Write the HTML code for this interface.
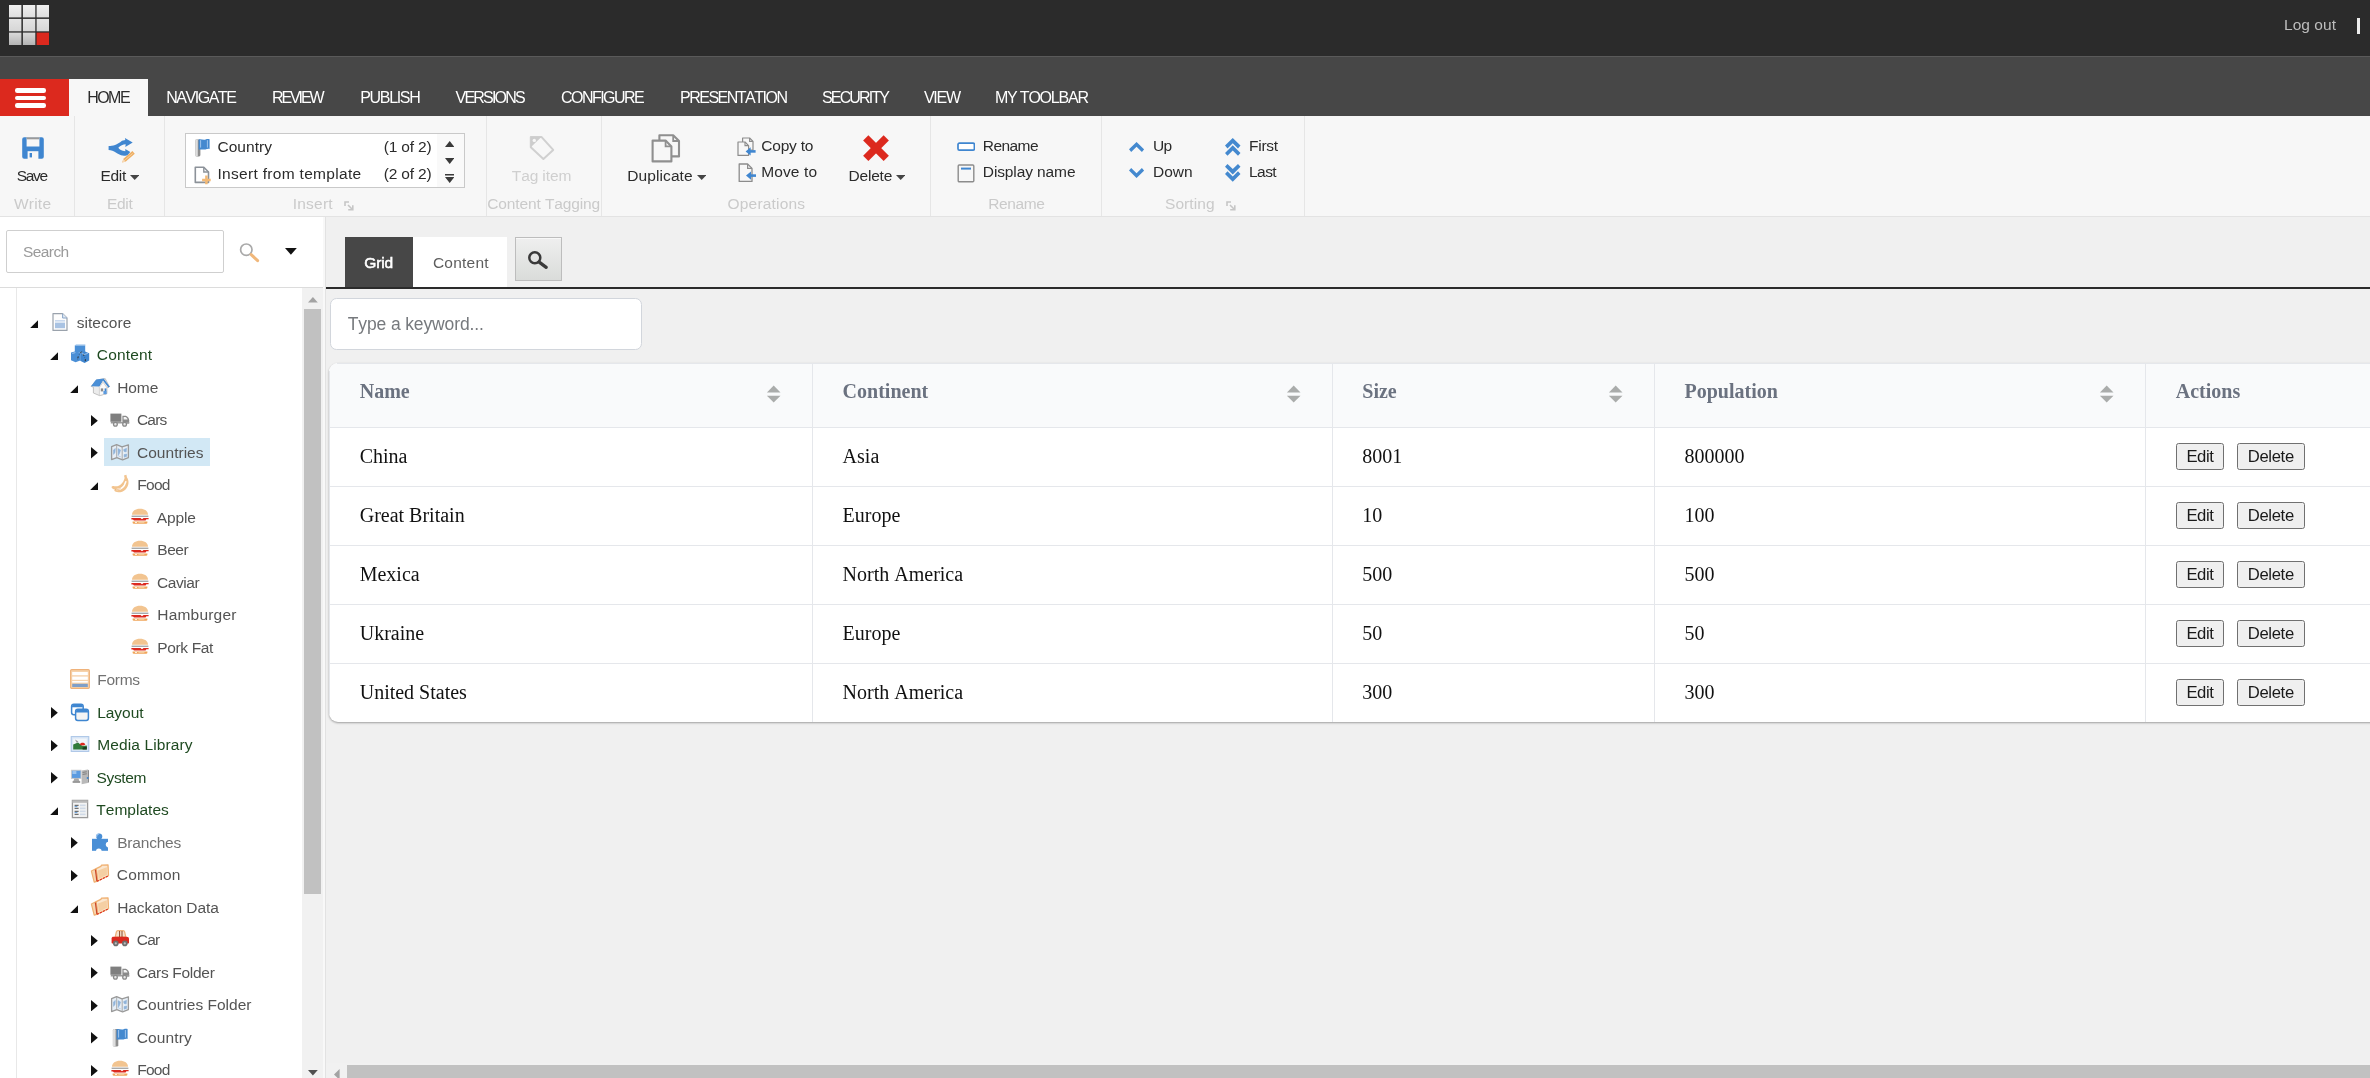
<!DOCTYPE html>
<html><head><meta charset="utf-8"><title>Sitecore</title><style>
html,body{margin:0;padding:0;}
body{width:2370px;height:1078px;overflow:hidden;position:relative;background:#f0f0f0;font-family:"Liberation Sans",sans-serif;font-kerning:none;}
#w{position:absolute;left:0;top:0;width:2370px;height:1078px;overflow:hidden;will-change:transform;background:#f0f0f0;}
.r{position:absolute;display:block;}
.t{position:absolute;white-space:pre;display:block;font-kerning:none;}
</style></head><body><div id="w">
<div class="r" style="left:0px;top:0px;width:2370px;height:56px;background:#2b2b2b;"></div>
<div class="r" style="left:0px;top:56px;width:2370px;height:1px;background:#5a5a5a;"></div>
<div class="r" style="left:0px;top:57px;width:2370px;height:59px;background:#474747;"></div>
<svg class="r" style="left:9px;top:5px;" width="40" height="40" viewBox="0 0 40 40"><defs><linearGradient id="lg0" x1="0" y1="0" x2="0" y2="1"><stop offset="0" stop-color="#f0f0f0"/><stop offset="1" stop-color="#dedede"/></linearGradient><linearGradient id="lg1" x1="0" y1="0" x2="0" y2="1"><stop offset="0" stop-color="#e4e4e4"/><stop offset="1" stop-color="#d6d6d6"/></linearGradient><linearGradient id="lg2" x1="0" y1="0" x2="0" y2="1"><stop offset="0" stop-color="#dadada"/><stop offset="1" stop-color="#b4b4b4"/></linearGradient></defs><rect x="0" y="0" width="12.4" height="12.4" fill="url(#lg0)"/><rect x="13.9" y="0" width="12.4" height="12.4" fill="url(#lg0)"/><rect x="27.6" y="0" width="12.4" height="12.4" fill="url(#lg0)"/><rect x="0" y="13.9" width="12.4" height="12.4" fill="url(#lg1)"/><rect x="13.9" y="13.9" width="12.4" height="12.4" fill="url(#lg1)"/><rect x="27.6" y="13.9" width="12.4" height="12.4" fill="url(#lg1)"/><rect x="0" y="27.6" width="12.4" height="12.4" fill="url(#lg2)"/><rect x="13.9" y="27.6" width="12.4" height="12.4" fill="url(#lg2)"/><rect x="27.6" y="27.6" width="12.4" height="12.4" fill="#dc291e"/></svg>
<span class="t" style="left:2284.00px;top:14.00px;font-size:15.50px;line-height:22px;color:#bdbdbd;letter-spacing:0.048px;">Log out</span>
<div class="r" style="left:2357.4px;top:18px;width:2.2px;height:15.5px;background:#ececec;"></div>
<div class="r" style="left:0px;top:79px;width:69px;height:37px;background:#dc291e;"></div>
<div class="r" style="left:15.3px;top:88.3px;width:30.6px;height:4.4px;background:#fff;border-radius:2.2px;"></div>
<div class="r" style="left:15.3px;top:95.8px;width:30.6px;height:4.4px;background:#fff;border-radius:2.2px;"></div>
<div class="r" style="left:15.3px;top:103.3px;width:30.6px;height:4.4px;background:#fff;border-radius:2.2px;"></div>
<div class="r" style="left:69px;top:79px;width:79px;height:37px;background:#f7f7f7;"></div>
<span class="t" style="left:87.20px;top:87.00px;font-size:16.00px;line-height:22px;color:#2b2b2b;letter-spacing:-1.533px;">HOME</span>
<span class="t" style="left:166.20px;top:87.00px;font-size:16.00px;line-height:22px;color:#ffffff;letter-spacing:-1.467px;">NAVIGATE</span>
<span class="t" style="left:272.10px;top:87.00px;font-size:16.00px;line-height:22px;color:#ffffff;letter-spacing:-2.123px;">REVIEW</span>
<span class="t" style="left:360.30px;top:87.00px;font-size:16.00px;line-height:22px;color:#ffffff;letter-spacing:-1.345px;">PUBLISH</span>
<span class="t" style="left:455.60px;top:87.00px;font-size:16.00px;line-height:22px;color:#ffffff;letter-spacing:-1.798px;">VERSIONS</span>
<span class="t" style="left:561.00px;top:87.00px;font-size:16.00px;line-height:22px;color:#ffffff;letter-spacing:-1.537px;">CONFIGURE</span>
<span class="t" style="left:680.00px;top:87.00px;font-size:16.00px;line-height:22px;color:#ffffff;letter-spacing:-1.493px;">PRESENTATION</span>
<span class="t" style="left:822.00px;top:87.00px;font-size:16.00px;line-height:22px;color:#ffffff;letter-spacing:-1.843px;">SECURITY</span>
<span class="t" style="left:924.00px;top:87.00px;font-size:16.00px;line-height:22px;color:#ffffff;letter-spacing:-1.297px;">VIEW</span>
<span class="t" style="left:995.00px;top:87.00px;font-size:16.00px;line-height:22px;color:#ffffff;letter-spacing:-1.210px;">MY TOOLBAR</span>
<div class="r" style="left:0px;top:116px;width:2370px;height:100px;background:#f7f7f7;"></div>
<div class="r" style="left:0px;top:216px;width:2370px;height:1px;background:#e3e3e3;"></div>
<div class="r" style="left:74px;top:116px;width:1px;height:100px;background:#e6e6e6;"></div>
<div class="r" style="left:164px;top:116px;width:1px;height:100px;background:#e6e6e6;"></div>
<div class="r" style="left:486px;top:116px;width:1px;height:100px;background:#e6e6e6;"></div>
<div class="r" style="left:601px;top:116px;width:1px;height:100px;background:#e6e6e6;"></div>
<div class="r" style="left:930px;top:116px;width:1px;height:100px;background:#e6e6e6;"></div>
<div class="r" style="left:1101px;top:116px;width:1px;height:100px;background:#e6e6e6;"></div>
<div class="r" style="left:1304px;top:116px;width:1px;height:100px;background:#e6e6e6;"></div>
<svg class="r" style="left:22px;top:137px;" width="22" height="22" viewBox="0 0 22 22"><path d="M2.2 0.3H19.8a2 2 0 0 1 2 2V19.8a2 2 0 0 1 -2 2H2.2a2 2 0 0 1 -2 -2V2.3a2 2 0 0 1 2 -2Z" fill="#3f86d0"/><rect x="4.6" y="0.3" width="12.8" height="9.2" fill="#f7f7f7"/><rect x="4.6" y="0.3" width="12.8" height="2" fill="#9a9a9a"/><rect x="5.6" y="14.2" width="10.8" height="7.9" fill="#f7f7f7"/><rect x="7.6" y="16" width="2.4" height="4.4" fill="#3f86d0"/></svg>
<span class="t" style="left:16.80px;top:165.00px;font-size:15.50px;line-height:22px;color:#2b2b2b;letter-spacing:-1.376px;">Save</span>
<span class="t" style="left:14.00px;top:193.00px;font-size:15.50px;line-height:22px;color:#cacaca;letter-spacing:0.211px;">Write</span>
<svg class="r" style="left:108px;top:137px;" width="28" height="27" viewBox="0 0 28 27"><path d="M0.6 9C5 9 9 8 14 3.8L17.3 3 16.9 1 24.7 5.4 17.3 9.9 17.7 7.3C15 7.4 12.5 8.8 10.3 10.8 11.5 12.4 13.5 14 17.3 14.3L17.3 12.1 22.3 14.9 19.5 18.2C17 18.8 15.5 18.8 14 18.6 10 17.5 6 13.2 0.6 13Z" fill="#4086d0"/><path d="M14.2 25.6L15.42 21.84 24.42 14.04 26.78 16.76 17.78 24.56Z" fill="#eeae62"/><path d="M14.2 25.6L15.42 21.84 17.78 24.56Z" fill="#f7d9b4"/><path d="M17.2 22.8L24.6 16.4" stroke="#f7d3a4" stroke-width="1" fill="none"/></svg>
<span class="t" style="left:100.40px;top:165.00px;font-size:15.50px;line-height:22px;color:#2b2b2b;letter-spacing:-0.270px;">Edit</span>
<svg class="r" style="left:129.8px;top:174.8px;" width="9.4" height="5" viewBox="0 0 9.4 5"><path d="M0 0H9.4 L4.7 5Z" fill="#454545"/></svg>
<span class="t" style="left:106.90px;top:193.00px;font-size:15.50px;line-height:22px;color:#cacaca;letter-spacing:-0.303px;">Edit</span>
<div class="r" style="left:185px;top:133px;width:280px;height:55px;background:#fff;border:1px solid #c9c9c9;box-sizing:border-box;"></div>
<div class="r" style="left:437px;top:134px;width:27px;height:53px;background:#f9f9f9;"></div>
<svg class="r" style="left:194px;top:138.8px;" width="17" height="18" viewBox="0 0 17 18"><rect x="1.2" y="0.4" width="5.2" height="17" rx="1.4" fill="#8e8e8e"/><rect x="1.2" y="0.4" width="2.6" height="17" rx="1.2" fill="#dedede"/><path d="M4.6 0.4C7 -0.2 9.4 1.2 11.6 0.4 13 0 14.4 -0.1 15.6 0.3V10C14.2 9.6 12.8 10 11.4 10.4 9.2 11 7 10 4.6 10.8Z" fill="#4489cf"/><path d="M6.6 1.2V8.6M13.4 1.2V8.6" stroke="#a9cbee" stroke-width=".9"/></svg>
<span class="t" style="left:217.40px;top:136.00px;font-size:15.50px;line-height:22px;color:#2b2b2b;letter-spacing:0.071px;">Country</span>
<span class="t" style="left:383.80px;top:136.00px;font-size:15.50px;line-height:22px;color:#2b2b2b;letter-spacing:-0.186px;">(1 of 2)</span>
<svg class="r" style="left:194px;top:165.6px;" width="19" height="19" viewBox="0 0 19 19"><path d="M1.3 1.3H9.8L14.5 6V16.4H1.3Z" fill="#fff" stroke="#8c9299" stroke-width="1.6" stroke-linejoin="round"/><path d="M9.8 1.3V6H14.5" fill="none" stroke="#8c9299" stroke-width="1.4"/><path d="M12.4 9.6V18.2M8.1 13.9H16.7" stroke="#f2b976" stroke-width="2.5" fill="none"/></svg>
<span class="t" style="left:217.40px;top:163.00px;font-size:15.50px;line-height:22px;color:#2b2b2b;letter-spacing:0.314px;">Insert from template</span>
<span class="t" style="left:383.80px;top:163.00px;font-size:15.50px;line-height:22px;color:#2b2b2b;letter-spacing:-0.186px;">(2 of 2)</span>
<svg class="r" style="left:445px;top:141px;" width="9.4" height="6" viewBox="0 0 9.4 6"><path d="M0 6H9.4L4.7 0Z" fill="#3a3a3a"/></svg>
<svg class="r" style="left:445px;top:158px;" width="9.4" height="6" viewBox="0 0 9.4 6"><path d="M0 0H9.4L4.7 6Z" fill="#3a3a3a"/></svg>
<svg class="r" style="left:445px;top:174px;" width="9.4" height="9" viewBox="0 0 9.4 9"><path d="M0 0H9.4V1.6H0Z M0 3H9.4L4.7 9Z" fill="#3a3a3a"/></svg>
<span class="t" style="left:292.70px;top:193.00px;font-size:15.50px;line-height:22px;color:#cacaca;letter-spacing:0.227px;">Insert</span>
<svg class="r" style="left:344px;top:200.5px;" width="10" height="10" viewBox="0 0 10 10"><path d="M1 5V1H5" fill="none" stroke="#c6c6c6" stroke-width="1.6"/><path d="M4 4L8.5 8.5M8.8 4.2V8.8H4.2" fill="none" stroke="#c6c6c6" stroke-width="1.6"/></svg>
<svg class="r" style="left:529px;top:135px;" width="26" height="26" viewBox="0 0 26 26"><path d="M1.8 1.9H12.4L24.2 14.9 14.4 24 1.8 12.3Z" fill="none" stroke="#d0d0d0" stroke-width="2" stroke-linejoin="round"/><path d="M1.8 1.9H12.4L1.8 12.3Z" fill="#cdcdcd"/><circle cx="5.3" cy="5.4" r="1.7" fill="#f7f7f7"/></svg>
<span class="t" style="left:511.80px;top:165.00px;font-size:15.50px;line-height:22px;color:#cfcfcf;letter-spacing:-0.110px;">Tag item</span>
<span class="t" style="left:487.30px;top:193.00px;font-size:15.50px;line-height:22px;color:#cacaca;letter-spacing:-0.127px;">Content Tagging</span>
<svg class="r" style="left:651px;top:134px;" width="30" height="29" viewBox="0 0 30 29"><path d="M8.4 1.2H22.2L28 7V22.4H8.4Z" fill="#f7f7f7" stroke="#8f8f8f" stroke-width="2.1" stroke-linejoin="round"/><path d="M22.2 1.2V7H28" fill="none" stroke="#8f8f8f" stroke-width="1.8"/><path d="M1.6 6.6H14.6L20.4 12.4V27.4H1.6Z" fill="#f7f7f7" stroke="#8f8f8f" stroke-width="2.1" stroke-linejoin="round"/><path d="M14.6 6.6V12.4H20.4" fill="none" stroke="#8f8f8f" stroke-width="1.8"/></svg>
<span class="t" style="left:627.30px;top:165.00px;font-size:15.50px;line-height:22px;color:#2b2b2b;letter-spacing:0.085px;">Duplicate</span>
<svg class="r" style="left:697px;top:174.8px;" width="9.4" height="5" viewBox="0 0 9.4 5"><path d="M0 0H9.4 L4.7 5Z" fill="#454545"/></svg>
<svg class="r" style="left:736.5px;top:137px;" width="20" height="20" viewBox="0 0 20 20"><path d="M5.6 1H12.6L16 4.4V13H5.6Z" fill="#f7f7f7" stroke="#8c8c8c" stroke-width="1.2" stroke-linejoin="round"/><path d="M12.6 1V4.4H16" fill="none" stroke="#8c8c8c" stroke-width="1.1"/><path d="M1 5H8L11.6 8.6V18.4H1Z" fill="#f7f7f7" stroke="#8c8c8c" stroke-width="1.2" stroke-linejoin="round"/><path d="M8 5V8.6H11.6" fill="none" stroke="#8c8c8c" stroke-width="1.1"/><path d="M18.6 14.4H12.4" stroke="#3f86d0" stroke-width="2.6" fill="none"/><path d="M8.6 14.4L13.6 10.2V18.6Z" fill="#3f86d0"/></svg>
<span class="t" style="left:761.20px;top:135.00px;font-size:15.50px;line-height:22px;color:#2b2b2b;letter-spacing:-0.186px;">Copy to</span>
<svg class="r" style="left:736.5px;top:163px;" width="20" height="20" viewBox="0 0 20 20"><path d="M2.2 1H10.6L15 5.4V18.4H2.2Z" fill="#f7f7f7" stroke="#8c8c8c" stroke-width="1.3" stroke-linejoin="round"/><path d="M10.6 1V5.4H15" fill="none" stroke="#8c8c8c" stroke-width="1.2"/><path d="M19 12.6H12.8" stroke="#3f86d0" stroke-width="2.6" fill="none"/><path d="M9 12.6L14 8.4V16.8Z" fill="#3f86d0"/></svg>
<span class="t" style="left:761.20px;top:161.00px;font-size:15.50px;line-height:22px;color:#2b2b2b;letter-spacing:0.127px;">Move to</span>
<svg class="r" style="left:862px;top:134px;" width="28" height="28" viewBox="0 0 28 28"><g transform="translate(14 14.05) rotate(45)" fill="#dc291e"><rect x="-14.5" y="-3.7" width="29" height="7.4"/><rect x="-3.7" y="-14.5" width="7.4" height="29"/></g></svg>
<span class="t" style="left:848.40px;top:165.00px;font-size:15.50px;line-height:22px;color:#2b2b2b;letter-spacing:-0.161px;">Delete</span>
<svg class="r" style="left:896px;top:174.8px;" width="9.4" height="5" viewBox="0 0 9.4 5"><path d="M0 0H9.4 L4.7 5Z" fill="#454545"/></svg>
<span class="t" style="left:727.60px;top:193.00px;font-size:15.50px;line-height:22px;color:#cacaca;letter-spacing:0.176px;">Operations</span>
<svg class="r" style="left:956.5px;top:142px;" width="18.5" height="9.5" viewBox="0 0 18.5 9.5"><rect x="1" y="1.2" width="16.4" height="7" rx="1.4" fill="#fff" stroke="#3f86d0" stroke-width="1.7"/></svg>
<span class="t" style="left:982.80px;top:135.00px;font-size:15.50px;line-height:22px;color:#2b2b2b;letter-spacing:-0.557px;">Rename</span>
<svg class="r" style="left:956.5px;top:163.5px;" width="18.5" height="19" viewBox="0 0 18.5 19"><rect x="1.2" y="1" width="15.6" height="16.8" rx="1" fill="#f7f7f7" stroke="#8c8c8c" stroke-width="1.4"/><rect x="4" y="3.6" width="10" height="2" fill="#3f86d0"/></svg>
<span class="t" style="left:982.80px;top:161.00px;font-size:15.50px;line-height:22px;color:#2b2b2b;letter-spacing:-0.109px;">Display name</span>
<span class="t" style="left:988.20px;top:193.00px;font-size:15.50px;line-height:22px;color:#cacaca;letter-spacing:-0.357px;">Rename</span>
<svg class="r" style="left:1129.3px;top:142.1px;" width="15.1" height="9.9" viewBox="0 0 15.1 9.9"><path d="M7.55 0L15.1 7.3 12.9 9.9 7.55 4.7 2.2 9.9 0 7.3Z" fill="#4489cf"/></svg>
<span class="t" style="left:1153.00px;top:135.00px;font-size:15.50px;line-height:22px;color:#2b2b2b;letter-spacing:-0.614px;">Up</span>
<svg class="r" style="left:1129.3px;top:168px;" width="15.1" height="9.9" viewBox="0 0 15.1 9.9"><path d="M7.55 0L15.1 7.3 12.9 9.9 7.55 4.7 2.2 9.9 0 7.3Z" fill="#4489cf" transform="translate(0 9.9) scale(1 -1)"/></svg>
<span class="t" style="left:1153.00px;top:161.00px;font-size:15.50px;line-height:22px;color:#2b2b2b;letter-spacing:-0.043px;">Down</span>
<svg class="r" style="left:1225.2px;top:138.2px;" width="15.5" height="17.7" viewBox="0 0 15.5 17.7"><g fill="#4489cf"><path d="M7.75 0L15.5 7.6 13 10.4 7.75 5.3 2.5 10.4 0 7.6Z"/><path d="M7.75 0L15.5 7.6 13 10.4 7.75 5.3 2.5 10.4 0 7.6Z" transform="translate(0 7.3)"/></g></svg>
<span class="t" style="left:1249.10px;top:135.00px;font-size:15.50px;line-height:22px;color:#2b2b2b;letter-spacing:-0.282px;">First</span>
<svg class="r" style="left:1225.2px;top:164.3px;" width="15.5" height="17.7" viewBox="0 0 15.5 17.7"><g fill="#4489cf" transform="translate(0 17.7) scale(1 -1)"><path d="M7.75 0L15.5 7.6 13 10.4 7.75 5.3 2.5 10.4 0 7.6Z"/><path d="M7.75 0L15.5 7.6 13 10.4 7.75 5.3 2.5 10.4 0 7.6Z" transform="translate(0 7.3)"/></g></svg>
<span class="t" style="left:1249.10px;top:161.00px;font-size:15.50px;line-height:22px;color:#2b2b2b;letter-spacing:-0.599px;">Last</span>
<span class="t" style="left:1165.00px;top:193.00px;font-size:15.50px;line-height:22px;color:#cacaca;letter-spacing:0.065px;">Sorting</span>
<svg class="r" style="left:1226px;top:200.5px;" width="10" height="10" viewBox="0 0 10 10"><path d="M1 5V1H5" fill="none" stroke="#c6c6c6" stroke-width="1.6"/><path d="M4 4L8.5 8.5M8.8 4.2V8.8H4.2" fill="none" stroke="#c6c6c6" stroke-width="1.6"/></svg>
<div class="r" style="left:0px;top:217px;width:323px;height:861px;background:#fff;"></div>
<div class="r" style="left:323px;top:217px;width:2px;height:861px;background:#f8f8f8;"></div>
<div class="r" style="left:324.7px;top:217px;width:1.1px;height:861px;background:#e2e2e2;"></div>
<div class="r" style="left:6px;top:230px;width:218px;height:43px;background:#fff;border:1px solid #cfcfcf;box-sizing:border-box;border-radius:2px;"></div>
<span class="t" style="left:23.00px;top:241.00px;font-size:15.50px;line-height:22px;color:#9a9a9a;letter-spacing:-0.582px;">Search</span>
<svg class="r" style="left:239px;top:242px;" width="22" height="21" viewBox="0 0 22 21"><circle cx="7.3" cy="7.7" r="5.7" fill="#fff" stroke="#a9a9a9" stroke-width="1.7"/><path d="M12.2 12.6L18.6 18.6" stroke="#f0b77a" stroke-width="3" stroke-linecap="round"/></svg>
<svg class="r" style="left:285px;top:248px;" width="12" height="7" viewBox="0 0 12 7"><path d="M0 0H11.8L5.9 6.8Z" fill="#111"/></svg>
<div class="r" style="left:0px;top:287px;width:323px;height:1px;background:#dcdcdc;"></div>
<div class="r" style="left:16px;top:288px;width:1px;height:790px;background:#e8e8e8;"></div>
<div class="r" style="left:302px;top:288px;width:21px;height:790px;background:#f1f1f1;"></div>
<div class="r" style="left:304px;top:309px;width:17px;height:585px;background:#c1c1c1;"></div>
<svg class="r" style="left:307.6px;top:296.6px;" width="10" height="6" viewBox="0 0 10 6"><path d="M0 5.6H9.8L4.9 0Z" fill="#a3a3a3"/></svg>
<svg class="r" style="left:307.6px;top:1070px;" width="10" height="6" viewBox="0 0 10 6"><path d="M0 0H9.8L4.9 5.4Z" fill="#505050"/></svg>
<svg class="r" style="left:30px;top:319.5px;" width="8.2" height="8.2" viewBox="0 0 8.2 8.2"><path d="M8.2 0V8.2H0Z" fill="#111"/></svg>
<svg class="r" style="left:50px;top:311.9px;" width="20" height="20" viewBox="0 0 20 20"><path d="M3 1.6H12.6L17 6V18.4H3Z" fill="#fdfdfd" stroke="#9aa2ac" stroke-width="1.2" stroke-linejoin="round"/><path d="M12.6 1.6V6H17" fill="#dfe9f5" stroke="#8aa6c8" stroke-width="1"/><rect x="5" y="8" width="10" height="1.6" fill="#c9d9ee"/><rect x="5" y="10.6" width="10" height="5.6" fill="#a9c3e3"/></svg>
<span class="t" style="left:76.70px;top:312.00px;font-size:15.50px;line-height:22px;color:#545454;letter-spacing:0.061px;">sitecore</span>
<svg class="r" style="left:50px;top:352px;" width="8.2" height="8.2" viewBox="0 0 8.2 8.2"><path d="M8.2 0V8.2H0Z" fill="#111"/></svg>
<svg class="r" style="left:70px;top:344.4px;" width="20" height="20" viewBox="0 0 20 20"><path d="M4.8 1.4H15.2V8.6H4.8Z" fill="#4a8fd6"/><path d="M4.8 1.4L6 0.5H15.4L15.2 1.4Z" fill="#8db9e8"/><path d="M1 8.4L5.6 7.2 10.2 8.8V16.6L5.6 18.2 1 16.2Z" fill="#4a8fd6"/><path d="M10.2 9L15 7.4 19.2 9.2V16.6L14.6 19 10.2 16.8Z" fill="#3f86d0"/><path d="M11.6 7.6L9.2 10.6M8.2 12.4L7.6 16M13.2 10L14.6 13.4M15.4 15.2L15.2 17.6" stroke="#2b2b2b" stroke-width="1" stroke-dasharray="2 1.4"/><path d="M2.2 9.4L5.4 8.6M11.8 9.6L14.6 10.4 17.8 9.4" stroke="#a9cbee" stroke-width=".9" fill="none"/></svg>
<span class="t" style="left:96.80px;top:344.00px;font-size:15.50px;line-height:22px;color:#1f4a21;letter-spacing:0.152px;">Content</span>
<svg class="r" style="left:70px;top:384.5px;" width="8.2" height="8.2" viewBox="0 0 8.2 8.2"><path d="M8.2 0V8.2H0Z" fill="#111"/></svg>
<svg class="r" style="left:90px;top:376.9px;" width="20" height="20" viewBox="0 0 20 20"><path d="M1.2 9.4L6.4 3 15.2 1.6 19.4 9.6 18.6 10.4H16.8V16.6L9.6 18.6 3.4 16V10.2Z" fill="#ececec" stroke="#b4b4b4" stroke-width=".8"/><path d="M1 9.2L6.2 2.6 13.6 1.4 9 9.4Z" fill="#4a8fd6"/><path d="M13.6 1.4L19.8 9.8 18.4 10.6 13 3.6 9.2 9.6 8.6 8.6Z" fill="#3f86d0"/><path d="M9.4 10.4L13 5.2 16.8 10.4V16.6L9.4 18.6Z" fill="#fafafa" stroke="#c0c0c0" stroke-width=".6"/><rect x="10.8" y="11.4" width="2.4" height="3" fill="#8a8a8a"/><path d="M14.6 11.4H16.4V17.2H14.6Z" fill="#3f86d0"/><path d="M13.4 14H16.4V17H13.4Z" fill="#5b9be0"/></svg>
<span class="t" style="left:117.20px;top:377.00px;font-size:15.50px;line-height:22px;color:#545454;letter-spacing:-0.082px;">Home</span>
<svg class="r" style="left:91.1px;top:414.9px;" width="7" height="11.4" viewBox="0 0 7 11.4"><path d="M0 0L6.8 5.7 0 11.4Z" fill="#111"/></svg>
<svg class="r" style="left:110px;top:409.4px;" width="20" height="20" viewBox="0 0 20 20"><rect x="0.4" y="4.6" width="11" height="8.2" fill="#7f7f7f"/><path d="M12.4 6.8H15.8C17.8 7.4 19 9.2 19.2 11.2V14.4H12.4Z" fill="#8a8a8a"/><path d="M13.6 8H15.6C16.8 8.6 17.4 9.6 17.6 10.6H13.6Z" fill="#f4f4f4"/><rect x="0.8" y="13" width="18.4" height="1.5" fill="#9a9a9a"/><circle cx="5.4" cy="15.3" r="1.9" fill="#e8e8e8" stroke="#8a8a8a" stroke-width="1.3"/><circle cx="14.6" cy="15.3" r="1.9" fill="#e8e8e8" stroke="#8a8a8a" stroke-width="1.3"/></svg>
<span class="t" style="left:137.00px;top:409.00px;font-size:15.50px;line-height:22px;color:#545454;letter-spacing:-0.842px;">Cars</span>
<div class="r" style="left:104px;top:438px;width:106px;height:28px;background:#d2e8f5;"></div>
<svg class="r" style="left:91.1px;top:447.4px;" width="7" height="11.4" viewBox="0 0 7 11.4"><path d="M0 0L6.8 5.7 0 11.4Z" fill="#111"/></svg>
<svg class="r" style="left:110px;top:441.9px;" width="20" height="20" viewBox="0 0 20 20"><path d="M1.6 4.6L6.6 2.6 12 4.8 18.4 2.8V15.6L12.6 17.8 6.8 15.6 1.6 17.6Z" fill="#e6eef6" stroke="#9a9a9a" stroke-width="1.3" stroke-linejoin="round"/><path d="M6.7 2.8V15.4M12.2 5V17.6" stroke="#a4a4a4" stroke-width=".9"/><path d="M3.4 8L5.4 6.4 5 10.4 3.6 12.4ZM8 6.6L10.6 8 9.6 11.2 8.2 13.6ZM13.6 7.6L16.6 6.2 16.2 10 14 9.4ZM14 12.6L16.8 12 16.6 14.4 14.2 15.2ZM8.4 14L10.8 14.8" fill="#8fb3d9" stroke="#8fb3d9" stroke-width=".5"/></svg>
<span class="t" style="left:137.00px;top:442.00px;font-size:15.50px;line-height:22px;color:#545454;letter-spacing:0.020px;">Countries</span>
<svg class="r" style="left:90px;top:482px;" width="8.2" height="8.2" viewBox="0 0 8.2 8.2"><path d="M8.2 0V8.2H0Z" fill="#111"/></svg>
<svg class="r" style="left:110px;top:474.4px;" width="20" height="20" viewBox="0 0 20 20"><path d="M14 1.4L16.4 0.8 17 3.6C19.4 7 19 12 15.6 15.4 12.6 18.4 8 19 5.2 17.6 4 17 4.2 15.8 5 15.6 3 15.4 1.2 14.2 1.6 12.8 1.8 12 3 11.8 4.4 12.2 9 13.2 13.2 9.6 14.6 4Z" fill="#f2c48f"/><path d="M7 15.6C10.6 15.4 14.4 12.8 15.8 7.8" fill="none" stroke="#fff" stroke-width="1.5" stroke-linecap="round"/><path d="M5 15.6C7 15.8 9 15.4 10.6 14.6" fill="none" stroke="#eab276" stroke-width=".7"/></svg>
<span class="t" style="left:137.20px;top:474.00px;font-size:15.50px;line-height:22px;color:#545454;letter-spacing:-0.676px;">Food</span>
<svg class="r" style="left:130px;top:506.9px;" width="20" height="20" viewBox="0 0 20 20"><path d="M2 7.8C2 4 5.4 1.8 10 1.8S18 4 18 7.8Z" fill="#f2c490"/><rect x="1.6" y="8.6" width="16.8" height="1.3" fill="#a0a0a0"/><path d="M1.4 10.8H18.6V13.4H1.4Z" fill="#fff"/><path d="M1.4 11H10.5L12 12.2 13.6 11H18.6V12.2H16.4L15.6 13.4H4L3 12.6H1.4Z" fill="#dc291e"/><path d="M2.6 14.4H17.4V15.4C17.4 16.4 16.6 16.8 15.8 16.8H4.2C3.4 16.8 2.6 16.4 2.6 15.4Z" fill="#f0a55a"/><rect x="5" y="15.2" width="2" height=".8" fill="#fff"/><rect x="8.4" y="15.2" width="6" height=".8" fill="#f7d2a8"/></svg>
<span class="t" style="left:156.70px;top:507.00px;font-size:15.50px;line-height:22px;color:#545454;letter-spacing:-0.086px;">Apple</span>
<svg class="r" style="left:130px;top:539.4px;" width="20" height="20" viewBox="0 0 20 20"><path d="M2 7.8C2 4 5.4 1.8 10 1.8S18 4 18 7.8Z" fill="#f2c490"/><rect x="1.6" y="8.6" width="16.8" height="1.3" fill="#a0a0a0"/><path d="M1.4 10.8H18.6V13.4H1.4Z" fill="#fff"/><path d="M1.4 11H10.5L12 12.2 13.6 11H18.6V12.2H16.4L15.6 13.4H4L3 12.6H1.4Z" fill="#dc291e"/><path d="M2.6 14.4H17.4V15.4C17.4 16.4 16.6 16.8 15.8 16.8H4.2C3.4 16.8 2.6 16.4 2.6 15.4Z" fill="#f0a55a"/><rect x="5" y="15.2" width="2" height=".8" fill="#fff"/><rect x="8.4" y="15.2" width="6" height=".8" fill="#f7d2a8"/></svg>
<span class="t" style="left:157.30px;top:539.00px;font-size:15.50px;line-height:22px;color:#545454;letter-spacing:-0.480px;">Beer</span>
<svg class="r" style="left:130px;top:571.9px;" width="20" height="20" viewBox="0 0 20 20"><path d="M2 7.8C2 4 5.4 1.8 10 1.8S18 4 18 7.8Z" fill="#f2c490"/><rect x="1.6" y="8.6" width="16.8" height="1.3" fill="#a0a0a0"/><path d="M1.4 10.8H18.6V13.4H1.4Z" fill="#fff"/><path d="M1.4 11H10.5L12 12.2 13.6 11H18.6V12.2H16.4L15.6 13.4H4L3 12.6H1.4Z" fill="#dc291e"/><path d="M2.6 14.4H17.4V15.4C17.4 16.4 16.6 16.8 15.8 16.8H4.2C3.4 16.8 2.6 16.4 2.6 15.4Z" fill="#f0a55a"/><rect x="5" y="15.2" width="2" height=".8" fill="#fff"/><rect x="8.4" y="15.2" width="6" height=".8" fill="#f7d2a8"/></svg>
<span class="t" style="left:156.90px;top:572.00px;font-size:15.50px;line-height:22px;color:#545454;letter-spacing:-0.398px;">Caviar</span>
<svg class="r" style="left:130px;top:604.4px;" width="20" height="20" viewBox="0 0 20 20"><path d="M2 7.8C2 4 5.4 1.8 10 1.8S18 4 18 7.8Z" fill="#f2c490"/><rect x="1.6" y="8.6" width="16.8" height="1.3" fill="#a0a0a0"/><path d="M1.4 10.8H18.6V13.4H1.4Z" fill="#fff"/><path d="M1.4 11H10.5L12 12.2 13.6 11H18.6V12.2H16.4L15.6 13.4H4L3 12.6H1.4Z" fill="#dc291e"/><path d="M2.6 14.4H17.4V15.4C17.4 16.4 16.6 16.8 15.8 16.8H4.2C3.4 16.8 2.6 16.4 2.6 15.4Z" fill="#f0a55a"/><rect x="5" y="15.2" width="2" height=".8" fill="#fff"/><rect x="8.4" y="15.2" width="6" height=".8" fill="#f7d2a8"/></svg>
<span class="t" style="left:157.30px;top:604.00px;font-size:15.50px;line-height:22px;color:#545454;letter-spacing:0.196px;">Hamburger</span>
<svg class="r" style="left:130px;top:636.9px;" width="20" height="20" viewBox="0 0 20 20"><path d="M2 7.8C2 4 5.4 1.8 10 1.8S18 4 18 7.8Z" fill="#f2c490"/><rect x="1.6" y="8.6" width="16.8" height="1.3" fill="#a0a0a0"/><path d="M1.4 10.8H18.6V13.4H1.4Z" fill="#fff"/><path d="M1.4 11H10.5L12 12.2 13.6 11H18.6V12.2H16.4L15.6 13.4H4L3 12.6H1.4Z" fill="#dc291e"/><path d="M2.6 14.4H17.4V15.4C17.4 16.4 16.6 16.8 15.8 16.8H4.2C3.4 16.8 2.6 16.4 2.6 15.4Z" fill="#f0a55a"/><rect x="5" y="15.2" width="2" height=".8" fill="#fff"/><rect x="8.4" y="15.2" width="6" height=".8" fill="#f7d2a8"/></svg>
<span class="t" style="left:157.30px;top:637.00px;font-size:15.50px;line-height:22px;color:#545454;letter-spacing:-0.367px;">Pork Fat</span>
<svg class="r" style="left:70px;top:669.4px;" width="20" height="20" viewBox="0 0 20 20"><rect x="0.6" y="0.6" width="18.8" height="18.8" rx="1.2" fill="#f6d3ad" stroke="#efb27a" stroke-width="1.1"/><rect x="2.2" y="3" width="15.6" height="3.2" fill="#fff"/><rect x="2.2" y="7.6" width="15.6" height="3.2" fill="#fff"/><rect x="2.2" y="12" width="15.6" height="1.6" fill="#fff"/><rect x="2.2" y="14.8" width="15.6" height="3.2" fill="#7f9fc8"/></svg>
<span class="t" style="left:97.20px;top:669.00px;font-size:15.50px;line-height:22px;color:#727272;letter-spacing:-0.253px;">Forms</span>
<svg class="r" style="left:51.1px;top:707.4px;" width="7" height="11.4" viewBox="0 0 7 11.4"><path d="M0 0L6.8 5.7 0 11.4Z" fill="#111"/></svg>
<svg class="r" style="left:70px;top:701.9px;" width="20" height="20" viewBox="0 0 20 20"><rect x="1.6" y="2.2" width="11.6" height="10.6" rx="2.2" fill="#fff" stroke="#3f86d0" stroke-width="1.5"/><path d="M2 5.2V4.2A1.8 1.8 0 0 1 3.8 2.4H11A1.8 1.8 0 0 1 12.8 4.2V5.2Z" fill="#3f86d0"/><rect x="5.6" y="7.2" width="12.8" height="11.2" rx="2.2" fill="#f4f4f4" stroke="#3f86d0" stroke-width="1.5"/><path d="M6 10.4V9.2A1.8 1.8 0 0 1 7.8 7.4H16.2A1.8 1.8 0 0 1 18 9.2V10.4Z" fill="#3f86d0"/></svg>
<span class="t" style="left:97.20px;top:702.00px;font-size:15.50px;line-height:22px;color:#1f4a21;letter-spacing:-0.028px;">Layout</span>
<svg class="r" style="left:51.1px;top:739.9px;" width="7" height="11.4" viewBox="0 0 7 11.4"><path d="M0 0L6.8 5.7 0 11.4Z" fill="#111"/></svg>
<svg class="r" style="left:70px;top:734.4px;" width="20" height="20" viewBox="0 0 20 20"><rect x="1.2" y="2.6" width="17.6" height="14.8" fill="#dbe8f7" stroke="#a9c4e6" stroke-width="1"/><rect x="3.2" y="4.6" width="13.6" height="10.8" fill="#f2f6fa"/><path d="M3.2 15.4V10.6L8 8.4 12.4 12 16.8 11.4V15.4Z" fill="#2f7a3a"/><path d="M9.6 10.6C10.6 8.4 14.4 8.2 15.4 10.6 13.8 11.8 11.4 12 9.6 10.6Z" fill="#dc291e"/><path d="M5 5.6L8.4 7.6 6.8 9Z" fill="#9a9a9a"/><path d="M12.6 13.4L16.8 12.4V15.4H12.6Z" fill="#1d3d22"/></svg>
<span class="t" style="left:97.20px;top:734.00px;font-size:15.50px;line-height:22px;color:#1f4a21;letter-spacing:0.117px;">Media Library</span>
<svg class="r" style="left:51.1px;top:772.4px;" width="7" height="11.4" viewBox="0 0 7 11.4"><path d="M0 0L6.8 5.7 0 11.4Z" fill="#111"/></svg>
<svg class="r" style="left:70px;top:766.9px;" width="20" height="20" viewBox="0 0 20 20"><rect x="1.4" y="3.2" width="9.6" height="8.2" fill="#5b9be0" stroke="#c9c9c9" stroke-width=".9"/><rect x="2.4" y="4" width="4" height="3" fill="#9cc4ee"/><path d="M4.4 11.6H8.4L9.6 14.4H3.2Z" fill="#a8a8a8"/><rect x="2.6" y="14.2" width="7.6" height="1.6" fill="#8a8a8a"/><path d="M11.6 3.4L17.8 2.6V16L11.6 17.2Z" fill="#b9b9b9"/><path d="M17.8 2.6L19 3.6V15.2L17.8 16Z" fill="#8a8a8a"/><path d="M12.6 5.4L16.8 4.8M12.6 7.4L16.8 6.8" stroke="#6f6f6f" stroke-width=".8"/><circle cx="17.6" cy="11" r="1" fill="#3f86d0"/></svg>
<span class="t" style="left:96.60px;top:767.00px;font-size:15.50px;line-height:22px;color:#1f4a21;letter-spacing:-0.395px;">System</span>
<svg class="r" style="left:50px;top:807px;" width="8.2" height="8.2" viewBox="0 0 8.2 8.2"><path d="M8.2 0V8.2H0Z" fill="#111"/></svg>
<svg class="r" style="left:70px;top:799.4px;" width="20" height="20" viewBox="0 0 20 20"><rect x="2.4" y="1.4" width="15.2" height="17.2" fill="#f4f4f4" stroke="#9a9a9a" stroke-width="1.3"/><rect x="2.4" y="1.4" width="15.2" height="2.4" fill="#b9b9b9"/><path d="M4.6 6.4H8.6M4.6 9.4H8.6M4.6 12.4H8.6M4.6 15.4H8.6" stroke="#6f6f6f" stroke-width="1.2"/><path d="M10 6.4H15.6M10 9.4H15.6M10 12.4H15.6M10 15.4H15.6" stroke="#cfd9e6" stroke-width="1.6"/><path d="M4.6 7.6H7.4M4.6 13.6H7.4" stroke="#3f86d0" stroke-width=".8"/></svg>
<span class="t" style="left:96.30px;top:799.00px;font-size:15.50px;line-height:22px;color:#1f4a21;letter-spacing:0.021px;">Templates</span>
<svg class="r" style="left:71.1px;top:837.4px;" width="7" height="11.4" viewBox="0 0 7 11.4"><path d="M0 0L6.8 5.7 0 11.4Z" fill="#111"/></svg>
<svg class="r" style="left:90px;top:831.9px;" width="20" height="20" viewBox="0 0 20 20"><rect x="2" y="6.8" width="16" height="12" fill="#4a8fd6"/><circle cx="9.2" cy="4.6" r="3.1" fill="#4a8fd6"/><path d="M6.6 5.4A2.8 2.8 0 0 1 9 1.8" stroke="#9cc4ee" stroke-width="1.3" fill="none"/><circle cx="18.6" cy="12.6" r="2.8" fill="#fff"/><circle cx="8.8" cy="19.4" r="2.8" fill="#fff"/></svg>
<span class="t" style="left:117.20px;top:832.00px;font-size:15.50px;line-height:22px;color:#727272;letter-spacing:-0.197px;">Branches</span>
<svg class="r" style="left:71.1px;top:869.9px;" width="7" height="11.4" viewBox="0 0 7 11.4"><path d="M0 0L6.8 5.7 0 11.4Z" fill="#111"/></svg>
<svg class="r" style="left:90px;top:864.4px;" width="20" height="20" viewBox="0 0 20 20"><path d="M6.2 4.6L10.8 2.4 11.6 1.1 18 0.9 18.5 11.6 7.8 17Z" fill="#fae6cf" stroke="#efb071" stroke-width="1.3" stroke-linejoin="round"/><path d="M8 6.4L16.8 3.2 17 10.8 8.6 15Z" fill="#f5cfa3"/><path d="M1.4 7L5.8 4.8 7.6 17.2 4.2 18.2Z" fill="#f7d6b0" stroke="#efb071" stroke-width="1.2" stroke-linejoin="round"/><path d="M5.4 5.6L6.9 17.2" stroke="#c9452a" stroke-width="1.2"/><path d="M7 17.3L18.4 11.9" stroke="#dc291e" stroke-width="1.1" stroke-dasharray="2 1.3"/></svg>
<span class="t" style="left:116.80px;top:864.00px;font-size:15.50px;line-height:22px;color:#545454;letter-spacing:0.164px;">Common</span>
<svg class="r" style="left:70px;top:904.5px;" width="8.2" height="8.2" viewBox="0 0 8.2 8.2"><path d="M8.2 0V8.2H0Z" fill="#111"/></svg>
<svg class="r" style="left:90px;top:896.9px;" width="20" height="20" viewBox="0 0 20 20"><path d="M6.2 4.6L10.8 2.4 11.6 1.1 18 0.9 18.5 11.6 7.8 17Z" fill="#fae6cf" stroke="#efb071" stroke-width="1.3" stroke-linejoin="round"/><path d="M8 6.4L16.8 3.2 17 10.8 8.6 15Z" fill="#f5cfa3"/><path d="M1.4 7L5.8 4.8 7.6 17.2 4.2 18.2Z" fill="#f7d6b0" stroke="#efb071" stroke-width="1.2" stroke-linejoin="round"/><path d="M5.4 5.6L6.9 17.2" stroke="#c9452a" stroke-width="1.2"/><path d="M7 17.3L18.4 11.9" stroke="#dc291e" stroke-width="1.1" stroke-dasharray="2 1.3"/></svg>
<span class="t" style="left:117.20px;top:897.00px;font-size:15.50px;line-height:22px;color:#545454;letter-spacing:-0.077px;">Hackaton Data</span>
<svg class="r" style="left:91.1px;top:934.9px;" width="7" height="11.4" viewBox="0 0 7 11.4"><path d="M0 0L6.8 5.7 0 11.4Z" fill="#111"/></svg>
<svg class="r" style="left:110px;top:929.4px;" width="20" height="20" viewBox="0 0 20 20"><path d="M5.2 8.2L6.4 2.8C6.6 2 7.2 1.6 8 1.6H13C13.8 1.6 14.4 2 14.6 2.8L15.8 8.2Z" fill="#f7e3cf" stroke="#efb27a" stroke-width="1.3"/><path d="M9.6 2V8M12 2V8" stroke="#8a4a2a" stroke-width="1"/><path d="M1.6 9.4C1.6 8.4 2.4 7.8 3.4 7.8H16.8C18 7.8 19 8.6 19 9.8V13.4C19 14 18.6 14.4 18 14.4H2.6C2 14.4 1.6 14 1.6 13.4Z" fill="#dc291e"/><circle cx="5.8" cy="14.4" r="2.8" fill="#6f6f6f"/><circle cx="5.8" cy="14.4" r="1.1" fill="#bdbdbd"/><circle cx="14.8" cy="14.4" r="2.8" fill="#6f6f6f"/><circle cx="14.8" cy="14.4" r="1.1" fill="#bdbdbd"/></svg>
<span class="t" style="left:136.80px;top:929.00px;font-size:15.50px;line-height:22px;color:#545454;letter-spacing:-0.838px;">Car</span>
<svg class="r" style="left:91.1px;top:967.4px;" width="7" height="11.4" viewBox="0 0 7 11.4"><path d="M0 0L6.8 5.7 0 11.4Z" fill="#111"/></svg>
<svg class="r" style="left:110px;top:961.9px;" width="20" height="20" viewBox="0 0 20 20"><rect x="0.4" y="4.6" width="11" height="8.2" fill="#7f7f7f"/><path d="M12.4 6.8H15.8C17.8 7.4 19 9.2 19.2 11.2V14.4H12.4Z" fill="#8a8a8a"/><path d="M13.6 8H15.6C16.8 8.6 17.4 9.6 17.6 10.6H13.6Z" fill="#f4f4f4"/><rect x="0.8" y="13" width="18.4" height="1.5" fill="#9a9a9a"/><circle cx="5.4" cy="15.3" r="1.9" fill="#e8e8e8" stroke="#8a8a8a" stroke-width="1.3"/><circle cx="14.6" cy="15.3" r="1.9" fill="#e8e8e8" stroke="#8a8a8a" stroke-width="1.3"/></svg>
<span class="t" style="left:136.80px;top:962.00px;font-size:15.50px;line-height:22px;color:#545454;letter-spacing:-0.297px;">Cars Folder</span>
<svg class="r" style="left:91.1px;top:999.9px;" width="7" height="11.4" viewBox="0 0 7 11.4"><path d="M0 0L6.8 5.7 0 11.4Z" fill="#111"/></svg>
<svg class="r" style="left:110px;top:994.4px;" width="20" height="20" viewBox="0 0 20 20"><path d="M1.6 4.6L6.6 2.6 12 4.8 18.4 2.8V15.6L12.6 17.8 6.8 15.6 1.6 17.6Z" fill="#e6eef6" stroke="#9a9a9a" stroke-width="1.3" stroke-linejoin="round"/><path d="M6.7 2.8V15.4M12.2 5V17.6" stroke="#a4a4a4" stroke-width=".9"/><path d="M3.4 8L5.4 6.4 5 10.4 3.6 12.4ZM8 6.6L10.6 8 9.6 11.2 8.2 13.6ZM13.6 7.6L16.6 6.2 16.2 10 14 9.4ZM14 12.6L16.8 12 16.6 14.4 14.2 15.2ZM8.4 14L10.8 14.8" fill="#8fb3d9" stroke="#8fb3d9" stroke-width=".5"/></svg>
<span class="t" style="left:136.80px;top:994.00px;font-size:15.50px;line-height:22px;color:#545454;letter-spacing:0.008px;">Countries Folder</span>
<svg class="r" style="left:91.1px;top:1032.4px;" width="7" height="11.4" viewBox="0 0 7 11.4"><path d="M0 0L6.8 5.7 0 11.4Z" fill="#111"/></svg>
<svg class="r" style="left:110px;top:1026.9px;" width="20" height="20" viewBox="0 0 20 20"><rect x="2.9" y="2" width="5.4" height="17.6" rx="1.4" fill="#8e8e8e"/><rect x="2.9" y="2" width="2.7" height="17.6" rx="1.2" fill="#dedede"/><path d="M6.6 2.2C9 1.6 11.4 3 13.6 2.2 15 1.8 16.4 1.7 17.6 2.1V12C16.2 11.6 14.8 12 13.4 12.4 11.2 13 9 12 6.6 12.8Z" fill="#4489cf"/><path d="M8.6 3V10.6M15.4 3V10.6" stroke="#a9cbee" stroke-width=".9"/></svg>
<span class="t" style="left:136.80px;top:1027.00px;font-size:15.50px;line-height:22px;color:#545454;letter-spacing:0.121px;">Country</span>
<svg class="r" style="left:91.1px;top:1064.9px;" width="7" height="11.4" viewBox="0 0 7 11.4"><path d="M0 0L6.8 5.7 0 11.4Z" fill="#111"/></svg>
<svg class="r" style="left:110px;top:1059.4px;" width="20" height="20" viewBox="0 0 20 20"><path d="M2 7.8C2 4 5.4 1.8 10 1.8S18 4 18 7.8Z" fill="#f2c490"/><rect x="1.6" y="8.6" width="16.8" height="1.3" fill="#a0a0a0"/><path d="M1.4 10.8H18.6V13.4H1.4Z" fill="#fff"/><path d="M1.4 11H10.5L12 12.2 13.6 11H18.6V12.2H16.4L15.6 13.4H4L3 12.6H1.4Z" fill="#dc291e"/><path d="M2.6 14.4H17.4V15.4C17.4 16.4 16.6 16.8 15.8 16.8H4.2C3.4 16.8 2.6 16.4 2.6 15.4Z" fill="#f0a55a"/><rect x="5" y="15.2" width="2" height=".8" fill="#fff"/><rect x="8.4" y="15.2" width="6" height=".8" fill="#f7d2a8"/></svg>
<span class="t" style="left:137.20px;top:1059.00px;font-size:15.50px;line-height:22px;color:#545454;letter-spacing:-0.743px;">Food</span>
<div class="r" style="left:326px;top:287px;width:2044px;height:2px;background:#2b2b2b;"></div>
<div class="r" style="left:345px;top:237px;width:68px;height:50px;background:#474747;"></div>
<span class="t" style="left:364.30px;top:252.00px;font-size:15.50px;line-height:22px;color:#fff;letter-spacing:-0.161px;-webkit-text-stroke:.55px #fff;">Grid</span>
<div class="r" style="left:413px;top:237px;width:94px;height:50px;background:#fff;"></div>
<span class="t" style="left:432.90px;top:252.00px;font-size:15.50px;line-height:22px;color:#5e5e5e;letter-spacing:0.235px;">Content</span>
<div class="r" style="left:515px;top:237px;width:47px;height:44px;background:linear-gradient(#efefef,#dadcda);border:1px solid #bdbdbd;box-sizing:border-box;box-shadow:inset 0 1px 0 #f8f8f8;"></div>
<svg class="r" style="left:525px;top:247px;" width="26" height="24" viewBox="0 0 26 24"><circle cx="9.8" cy="10.7" r="5.5" fill="none" stroke="#3a3a3a" stroke-width="2.5"/><path d="M14.2 15.2L21.2 20.3" stroke="#3a3a3a" stroke-width="3.3" stroke-linecap="round"/></svg>
<div class="r" style="left:330px;top:298px;width:312px;height:52px;background:#fff;border:1px solid #d2d6dc;box-sizing:border-box;border-radius:6.5px;"></div>
<span class="t" style="left:347.80px;top:312.00px;font-size:17.50px;line-height:24px;color:#76797d;letter-spacing:-0.131px;">Type a keyword...</span>
<div class="r" style="left:329px;top:363px;width:2100px;height:358.8px;background:#fff;border-radius:9px 0 0 9px;box-shadow:0 1px 3px rgba(0,0,0,.1),0 1px 2px rgba(0,0,0,.26);overflow:hidden;"></div>
<div class="r" style="left:329px;top:363px;width:2100px;height:64px;background:#f9fafb;border-radius:9px 0 0 0;"></div>
<div class="r" style="left:329px;top:427px;width:2041px;height:1px;background:#e5e7eb;"></div>
<div class="r" style="left:329px;top:486px;width:2041px;height:1px;background:#e5e7eb;"></div>
<div class="r" style="left:329px;top:545px;width:2041px;height:1px;background:#e5e7eb;"></div>
<div class="r" style="left:329px;top:604px;width:2041px;height:1px;background:#e5e7eb;"></div>
<div class="r" style="left:329px;top:663px;width:2041px;height:1px;background:#e5e7eb;"></div>
<div class="r" style="left:812px;top:363px;width:1px;height:358.8px;background:#e5e7eb;"></div>
<div class="r" style="left:1332px;top:363px;width:1px;height:358.8px;background:#e5e7eb;"></div>
<div class="r" style="left:1654px;top:363px;width:1px;height:358.8px;background:#e5e7eb;"></div>
<div class="r" style="left:2145px;top:363px;width:1px;height:358.8px;background:#e5e7eb;"></div>
<div class="r" style="left:329px;top:371px;width:1px;height:343px;background:#e5e7eb;"></div>
<div class="r" style="left:337px;top:363px;width:2041px;height:1px;background:#e5e7eb;"></div>
<span class="t" style="left:359.70px;top:377.00px;font-size:20.00px;line-height:28px;color:#6b7280;font-family:'Liberation Serif',serif;font-weight:700;">Name</span>
<span class="t" style="left:842.60px;top:377.00px;font-size:20.00px;line-height:28px;color:#6b7280;font-family:'Liberation Serif',serif;font-weight:700;">Continent</span>
<span class="t" style="left:1362.30px;top:377.00px;font-size:20.00px;line-height:28px;color:#6b7280;font-family:'Liberation Serif',serif;font-weight:700;">Size</span>
<span class="t" style="left:1684.50px;top:377.00px;font-size:20.00px;line-height:28px;color:#6b7280;font-family:'Liberation Serif',serif;font-weight:700;">Population</span>
<span class="t" style="left:2175.80px;top:377.00px;font-size:20.00px;line-height:28px;color:#6b7280;font-family:'Liberation Serif',serif;font-weight:700;">Actions</span>
<svg class="r" style="left:766px;top:385px;" width="16" height="19" viewBox="0 0 16 19"><path d="M0.9 7.5H14.5L7.7 0.4Z" fill="#aaacab"/><path d="M0.9 10.7H14.5L7.7 17.5Z" fill="#aaacab"/></svg>
<svg class="r" style="left:1286px;top:385px;" width="16" height="19" viewBox="0 0 16 19"><path d="M0.9 7.5H14.5L7.7 0.4Z" fill="#aaacab"/><path d="M0.9 10.7H14.5L7.7 17.5Z" fill="#aaacab"/></svg>
<svg class="r" style="left:1608px;top:385px;" width="16" height="19" viewBox="0 0 16 19"><path d="M0.9 7.5H14.5L7.7 0.4Z" fill="#aaacab"/><path d="M0.9 10.7H14.5L7.7 17.5Z" fill="#aaacab"/></svg>
<svg class="r" style="left:2099px;top:385px;" width="16" height="19" viewBox="0 0 16 19"><path d="M0.9 7.5H14.5L7.7 0.4Z" fill="#aaacab"/><path d="M0.9 10.7H14.5L7.7 17.5Z" fill="#aaacab"/></svg>
<span class="t" style="left:359.70px;top:442.00px;font-size:20.00px;line-height:28px;color:#111;font-family:'Liberation Serif',serif;">China</span>
<span class="t" style="left:842.60px;top:442.00px;font-size:20.00px;line-height:28px;color:#111;font-family:'Liberation Serif',serif;">Asia</span>
<span class="t" style="left:1362.30px;top:442.00px;font-size:20.00px;line-height:28px;color:#111;font-family:'Liberation Serif',serif;">8001</span>
<span class="t" style="left:1684.50px;top:442.00px;font-size:20.00px;line-height:28px;color:#111;font-family:'Liberation Serif',serif;">800000</span>
<div class="r" style="left:2175.8px;top:443px;width:48.2px;height:27px;background:#efefef;border:1.3px solid #707070;box-sizing:border-box;border-radius:2.6px;"></div>
<span class="t" style="left:2186.40px;top:445.00px;font-size:16.67px;line-height:23px;color:#1a1a1a;letter-spacing:-0.408px;">Edit</span>
<div class="r" style="left:2236.8px;top:443px;width:68.3px;height:27px;background:#efefef;border:1.3px solid #707070;box-sizing:border-box;border-radius:2.6px;"></div>
<span class="t" style="left:2247.70px;top:445.00px;font-size:16.67px;line-height:23px;color:#1a1a1a;letter-spacing:-0.337px;">Delete</span>
<span class="t" style="left:359.70px;top:501.00px;font-size:20.00px;line-height:28px;color:#111;font-family:'Liberation Serif',serif;">Great Britain</span>
<span class="t" style="left:842.60px;top:501.00px;font-size:20.00px;line-height:28px;color:#111;font-family:'Liberation Serif',serif;">Europe</span>
<span class="t" style="left:1362.30px;top:501.00px;font-size:20.00px;line-height:28px;color:#111;font-family:'Liberation Serif',serif;">10</span>
<span class="t" style="left:1684.50px;top:501.00px;font-size:20.00px;line-height:28px;color:#111;font-family:'Liberation Serif',serif;">100</span>
<div class="r" style="left:2175.8px;top:502px;width:48.2px;height:27px;background:#efefef;border:1.3px solid #707070;box-sizing:border-box;border-radius:2.6px;"></div>
<span class="t" style="left:2186.40px;top:504.00px;font-size:16.67px;line-height:23px;color:#1a1a1a;letter-spacing:-0.408px;">Edit</span>
<div class="r" style="left:2236.8px;top:502px;width:68.3px;height:27px;background:#efefef;border:1.3px solid #707070;box-sizing:border-box;border-radius:2.6px;"></div>
<span class="t" style="left:2247.70px;top:504.00px;font-size:16.67px;line-height:23px;color:#1a1a1a;letter-spacing:-0.337px;">Delete</span>
<span class="t" style="left:359.70px;top:560.00px;font-size:20.00px;line-height:28px;color:#111;font-family:'Liberation Serif',serif;">Mexica</span>
<span class="t" style="left:842.60px;top:560.00px;font-size:20.00px;line-height:28px;color:#111;font-family:'Liberation Serif',serif;">North America</span>
<span class="t" style="left:1362.30px;top:560.00px;font-size:20.00px;line-height:28px;color:#111;font-family:'Liberation Serif',serif;">500</span>
<span class="t" style="left:1684.50px;top:560.00px;font-size:20.00px;line-height:28px;color:#111;font-family:'Liberation Serif',serif;">500</span>
<div class="r" style="left:2175.8px;top:561px;width:48.2px;height:27px;background:#efefef;border:1.3px solid #707070;box-sizing:border-box;border-radius:2.6px;"></div>
<span class="t" style="left:2186.40px;top:563.00px;font-size:16.67px;line-height:23px;color:#1a1a1a;letter-spacing:-0.408px;">Edit</span>
<div class="r" style="left:2236.8px;top:561px;width:68.3px;height:27px;background:#efefef;border:1.3px solid #707070;box-sizing:border-box;border-radius:2.6px;"></div>
<span class="t" style="left:2247.70px;top:563.00px;font-size:16.67px;line-height:23px;color:#1a1a1a;letter-spacing:-0.337px;">Delete</span>
<span class="t" style="left:359.70px;top:619.00px;font-size:20.00px;line-height:28px;color:#111;font-family:'Liberation Serif',serif;">Ukraine</span>
<span class="t" style="left:842.60px;top:619.00px;font-size:20.00px;line-height:28px;color:#111;font-family:'Liberation Serif',serif;">Europe</span>
<span class="t" style="left:1362.30px;top:619.00px;font-size:20.00px;line-height:28px;color:#111;font-family:'Liberation Serif',serif;">50</span>
<span class="t" style="left:1684.50px;top:619.00px;font-size:20.00px;line-height:28px;color:#111;font-family:'Liberation Serif',serif;">50</span>
<div class="r" style="left:2175.8px;top:620px;width:48.2px;height:27px;background:#efefef;border:1.3px solid #707070;box-sizing:border-box;border-radius:2.6px;"></div>
<span class="t" style="left:2186.40px;top:622.00px;font-size:16.67px;line-height:23px;color:#1a1a1a;letter-spacing:-0.408px;">Edit</span>
<div class="r" style="left:2236.8px;top:620px;width:68.3px;height:27px;background:#efefef;border:1.3px solid #707070;box-sizing:border-box;border-radius:2.6px;"></div>
<span class="t" style="left:2247.70px;top:622.00px;font-size:16.67px;line-height:23px;color:#1a1a1a;letter-spacing:-0.337px;">Delete</span>
<span class="t" style="left:359.70px;top:678.00px;font-size:20.00px;line-height:28px;color:#111;font-family:'Liberation Serif',serif;">United States</span>
<span class="t" style="left:842.60px;top:678.00px;font-size:20.00px;line-height:28px;color:#111;font-family:'Liberation Serif',serif;">North America</span>
<span class="t" style="left:1362.30px;top:678.00px;font-size:20.00px;line-height:28px;color:#111;font-family:'Liberation Serif',serif;">300</span>
<span class="t" style="left:1684.50px;top:678.00px;font-size:20.00px;line-height:28px;color:#111;font-family:'Liberation Serif',serif;">300</span>
<div class="r" style="left:2175.8px;top:679px;width:48.2px;height:27px;background:#efefef;border:1.3px solid #707070;box-sizing:border-box;border-radius:2.6px;"></div>
<span class="t" style="left:2186.40px;top:681.00px;font-size:16.67px;line-height:23px;color:#1a1a1a;letter-spacing:-0.408px;">Edit</span>
<div class="r" style="left:2236.8px;top:679px;width:68.3px;height:27px;background:#efefef;border:1.3px solid #707070;box-sizing:border-box;border-radius:2.6px;"></div>
<span class="t" style="left:2247.70px;top:681.00px;font-size:16.67px;line-height:23px;color:#1a1a1a;letter-spacing:-0.337px;">Delete</span>
<div class="r" style="left:326px;top:1063px;width:2044px;height:15px;background:#f1f1f1;"></div>
<div class="r" style="left:347px;top:1065px;width:2023px;height:13px;background:#c1c1c1;"></div>
<svg class="r" style="left:333.6px;top:1069px;" width="6" height="9" viewBox="0 0 6 9"><path d="M5.6 0V11L0 5.5Z" fill="#a3a3a3"/></svg>
</div></body></html>
